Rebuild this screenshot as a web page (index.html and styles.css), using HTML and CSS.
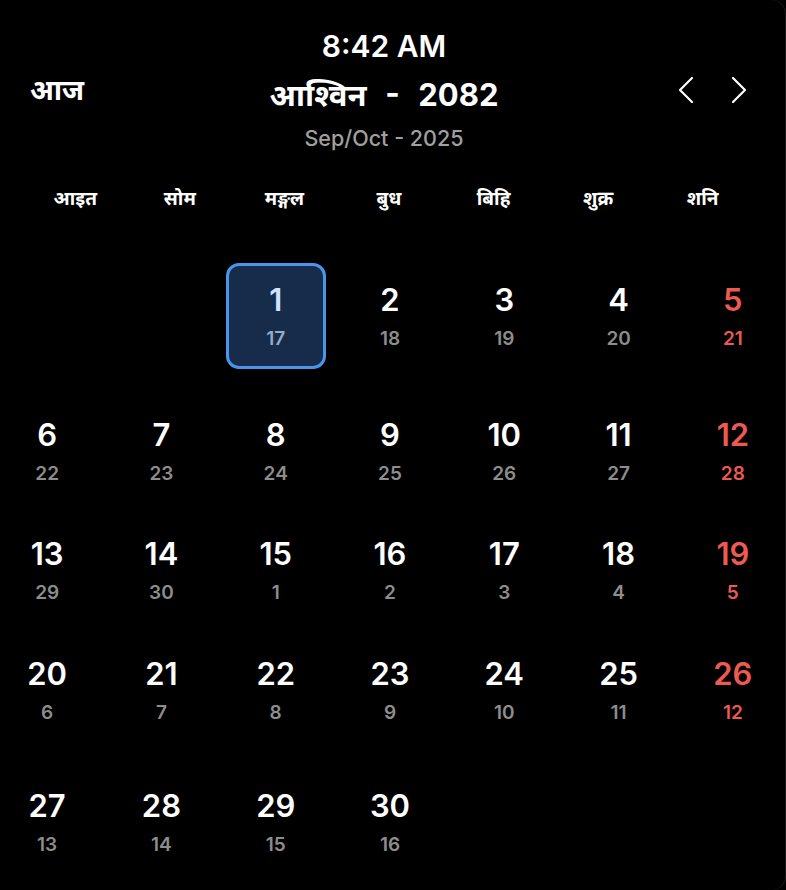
FILE: index.html
```html
<!DOCTYPE html>
<html lang="ne">
<head>
<meta charset="utf-8">
<title>Calendar</title>
<link rel="stylesheet" href="styles.css">
</head>
<body>
<div class="app">
  <header class="header">
    <div class="time">8:42 AM</div>
    <button class="today">आज</button>
    <div class="month">आश्विन &nbsp;-&nbsp; 2082</div>
    <div class="nav">
      <button class="navbtn" aria-label="previous">
        <svg width="18" height="28" viewBox="0 0 18 28"><path d="M15 2 L3 14 L15 26" fill="none" stroke="#fff" stroke-width="2.2" stroke-linecap="round" stroke-linejoin="round"/></svg>
      </button>
      <button class="navbtn" aria-label="next">
        <svg width="18" height="28" viewBox="0 0 18 28"><path d="M3 2 L15 14 L3 26" fill="none" stroke="#fff" stroke-width="2.2" stroke-linecap="round" stroke-linejoin="round"/></svg>
      </button>
    </div>
    <div class="sub">Sep/Oct - 2025</div>
  </header>

  <div class="weekdays">
    <div>आइत</div><div>सोम</div><div>मङ्गल</div><div>बुध</div><div>बिहि</div><div>शुक्र</div><div>शनि</div>
  </div>

  <div class="days">
    <div class="cell empty"></div>
    <div class="cell empty"></div>
    <div class="cell selected"><span class="d">1</span><span class="e">17</span></div>
    <div class="cell"><span class="d">2</span><span class="e">18</span></div>
    <div class="cell"><span class="d">3</span><span class="e">19</span></div>
    <div class="cell"><span class="d">4</span><span class="e">20</span></div>
    <div class="cell sat"><span class="d">5</span><span class="e">21</span></div>

    <div class="cell"><span class="d">6</span><span class="e">22</span></div>
    <div class="cell"><span class="d">7</span><span class="e">23</span></div>
    <div class="cell"><span class="d">8</span><span class="e">24</span></div>
    <div class="cell"><span class="d">9</span><span class="e">25</span></div>
    <div class="cell"><span class="d">10</span><span class="e">26</span></div>
    <div class="cell"><span class="d">11</span><span class="e">27</span></div>
    <div class="cell sat"><span class="d">12</span><span class="e">28</span></div>

    <div class="cell"><span class="d">13</span><span class="e">29</span></div>
    <div class="cell"><span class="d">14</span><span class="e">30</span></div>
    <div class="cell"><span class="d">15</span><span class="e">1</span></div>
    <div class="cell"><span class="d">16</span><span class="e">2</span></div>
    <div class="cell"><span class="d">17</span><span class="e">3</span></div>
    <div class="cell"><span class="d">18</span><span class="e">4</span></div>
    <div class="cell sat"><span class="d">19</span><span class="e">5</span></div>

    <div class="cell"><span class="d">20</span><span class="e">6</span></div>
    <div class="cell"><span class="d">21</span><span class="e">7</span></div>
    <div class="cell"><span class="d">22</span><span class="e">8</span></div>
    <div class="cell"><span class="d">23</span><span class="e">9</span></div>
    <div class="cell"><span class="d">24</span><span class="e">10</span></div>
    <div class="cell"><span class="d">25</span><span class="e">11</span></div>
    <div class="cell sat"><span class="d">26</span><span class="e">12</span></div>

    <div class="cell"><span class="d">27</span><span class="e">13</span></div>
    <div class="cell"><span class="d">28</span><span class="e">14</span></div>
    <div class="cell"><span class="d">29</span><span class="e">15</span></div>
    <div class="cell"><span class="d">30</span><span class="e">16</span></div>
  </div>
</div>
</body>
</html>
```

FILE: styles.css
```css
* { box-sizing: border-box; }
html, body {
  margin: 0;
  padding: 0;
  background: #000;
}
body {
  width: 786px;
  height: 890px;
  overflow: hidden;
  color: #fff;
  font-family: Inter, "Noto Sans", "Noto Sans Devanagari", sans-serif;
}
.app {
  width: 786px;
  height: 890px;
  background: #000;
  border-radius: 0 14px 14px 0;
  box-shadow: inset -1px 0 0 #1a1a1a;
  overflow: hidden;
}
button {
  background: none;
  border: 0;
  padding: 0;
  color: #fff;
  font: inherit;
  cursor: pointer;
}
.header {
  display: grid;
  grid-template-columns: 1fr auto 1fr;
  grid-template-rows: auto auto auto;
  align-items: start;
  padding-top: 28px;
  padding-right: 18px;
}
.time {
  grid-column: 2;
  grid-row: 1;
  text-align: center;
  font-size: 30px;
  font-weight: 600;
  line-height: 36px;
}
.today {
  grid-column: 1;
  grid-row: 2;
  justify-self: start;
  margin-left: 30px;
  margin-top: 3px;
  font-size: 28px;
  font-weight: 700;
  line-height: 46px;
}
.month {
  grid-column: 2;
  grid-row: 2;
  margin-top: 8px;
  text-align: center;
  font-size: 31px;
  font-weight: 700;
  line-height: 46px;
  white-space: nowrap;
  word-spacing: 2px;
}
.nav {
  grid-column: 3;
  grid-row: 2;
  justify-self: end;
  display: flex;
  gap: 35px;
  margin-right: 20px;
  margin-top: 12px;
}
.navbtn {
  display: flex;
  width: 18px;
  height: 28px;
}
.sub {
  grid-column: 2;
  grid-row: 3;
  text-align: center;
  font-size: 21.5px;
  color: #a0a0a0;
  font-weight: 500;
  line-height: 40px;
}
.weekdays {
  display: grid;
  grid-template-columns: repeat(7, 1fr);
  padding: 0 31px 0 23px;
  margin-top: 25px;
  height: 30px;
  align-items: center;
  text-align: center;
  font-size: 19px;
  font-weight: 700;
}
.days {
  display: grid;
  grid-template-columns: repeat(7, 1fr);
  grid-template-rows: 135px 119px 120px 132px 120px;
  width: 800px;
  margin-left: -10px;
  margin-top: 50px;
}
.cell {
  justify-self: center;
  width: 100px;
  height: 106px;
  border: 3px solid transparent;
  border-radius: 13px;
  display: flex;
  flex-direction: column;
  align-items: center;
  padding-top: 17px;
}
.d {
  font-size: 31px;
  font-weight: 600;
  line-height: 34px;
}
.e {
  margin-top: 10px;
  font-size: 19px;
  font-weight: 600;
  line-height: 24px;
  color: #8d8d8d;
}
.sat .d, .sat .e { color: #ec5a52; }
.selected {
  background: #172b4a;
  border-color: #4a95ec;
}
.selected .d { color: #cfe2ff; }
.selected .e { color: #98abc6; }
```
